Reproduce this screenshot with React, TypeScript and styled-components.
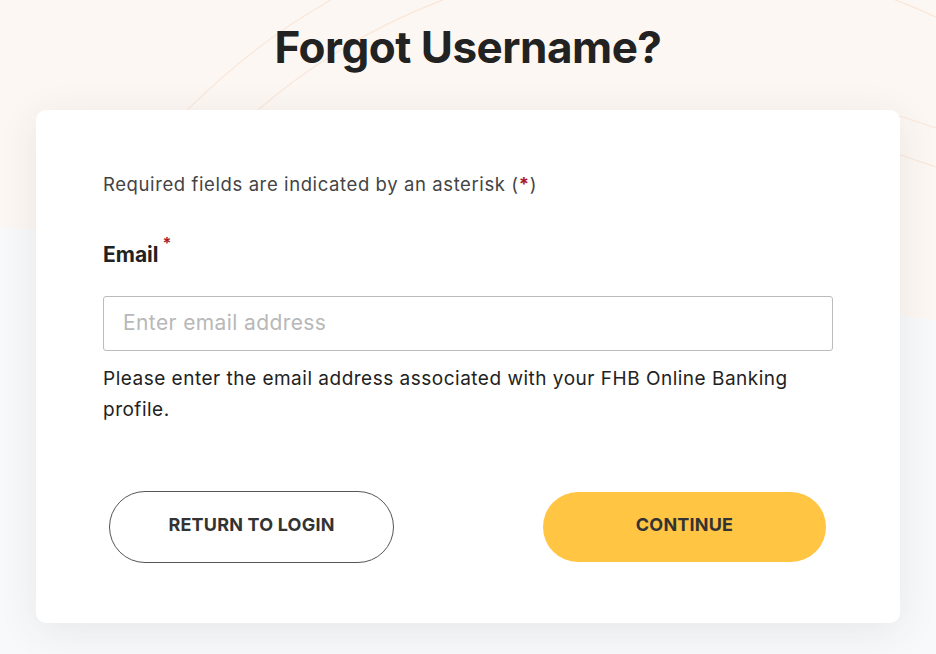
import React from "react";
import styled, { createGlobalStyle } from "styled-components";

const Global = createGlobalStyle`
  html, body { margin: 0; padding: 0; }
  body { font-family: Inter, "Noto Sans", sans-serif; background: #f8f9fa; }
  * { box-sizing: border-box; }
`;

const Page = styled.div`
  position: relative;
  width: 936px;
  height: 654px;
  overflow: hidden;
  background: #f8f9fa;
`;

const Backdrop = styled.svg`
  position: absolute;
  inset: 0;
  z-index: 0;
`;

const Content = styled.main`
  position: relative;
  z-index: 1;
  display: flex;
  flex-direction: column;
  align-items: center;
  padding-top: 20px;
`;

const Title = styled.h1`
  margin: 0;
  height: 90px;
  font-family: Inter, sans-serif;
  font-weight: 700;
  font-size: 44px;
  line-height: 54px;
  letter-spacing: -0.5px;
  color: #222222;
`;

const Card = styled.section`
  width: 864px;
  height: 513px;
  background: #ffffff;
  border-radius: 10px;
  box-shadow: 0 8px 40px rgba(40, 50, 70, 0.09);
  padding: 62px 67px 0;
  display: flex;
  flex-direction: column;
`;

const Note = styled.p`
  margin: 0;
  font-size: 18.5px;
  letter-spacing: 0.6px;
  line-height: 24px;
  color: #444444;
`;

const Star = styled.span`
  color: #a61b2b;
  font-weight: 700;
`;

const Label = styled.label`
  margin-top: 45px;
  display: flex;
  align-items: flex-start;
  gap: 4px;
  font-size: 21px;
  font-weight: 700;
  line-height: 28px;
  color: #222222;
`;

const LabelStar = styled.span`
  color: #a61b2b;
  font-size: 16px;
  line-height: 16px;
  margin-top: -6px;
`;

const Input = styled.input`
  margin-top: 27px;
  width: 730px;
  height: 55px;
  border: 1.5px solid #bcbcbc;
  border-radius: 3px;
  padding: 0 19px 2px;
  font-family: Inter, sans-serif;
  font-size: 21px;
  letter-spacing: 0.4px;
  color: #222222;
  outline: none;
  &::placeholder { color: #b8b8b8; }
`;

const Help = styled.p`
  margin: 12px 0 0;
  font-size: 19px;
  letter-spacing: 0.5px;
  line-height: 31px;
  color: #222222;
  max-width: 730px;
`;

const Actions = styled.div`
  margin-top: 66px;
  display: flex;
  justify-content: space-between;
  padding: 0 7px 0 6px;
`;

const Button = styled.button<{ $primary?: boolean }>`
  width: ${(p) => (p.$primary ? "283px" : "285px")};
  height: ${(p) => (p.$primary ? "70px" : "72px")};
  margin-top: ${(p) => (p.$primary ? "1px" : "0")};
  padding: 0 0 5px;
  border-radius: 36px;
  border: ${(p) => (p.$primary ? "none" : "1.5px solid #555555")};
  background: ${(p) => (p.$primary ? "#ffc543" : "#ffffff")};
  font-family: Inter, sans-serif;
  font-weight: 700;
  font-size: 18px;
  letter-spacing: 0.2px;
  color: #333333;
  text-transform: uppercase;
  cursor: pointer;
`;

const PEACH = "M0 0 H936 V320 Q520 268 0 227 Z";

export default function App() {
  return (
    <>
      <Global />
      <Page>
        <Backdrop width="936" height="654" viewBox="0 0 936 654">
          <defs>
            <clipPath id="peach">
              <path d={PEACH} />
            </clipPath>
          </defs>
          <path d={PEACH} fill="#fdf7f3" />
          <g clipPath="url(#peach)" fill="none" stroke="#f9e7da" strokeWidth="1.2">
            <circle cx="669" cy="590" r="632" />
            <circle cx="669" cy="590" r="680" />
            <path d="M890 113 Q912 120 936 128" />
            <path d="M890 151 Q912 159 936 167" />
          </g>
        </Backdrop>
        <Content>
          <Title>Forgot Username?</Title>
          <Card>
            <Note>
              Required fields are indicated by an asterisk (<Star>*</Star>)
            </Note>
            <Label htmlFor="email">
              Email <LabelStar>*</LabelStar>
            </Label>
            <Input id="email" type="email" placeholder="Enter email address" />
            <Help>
              Please enter the email address associated with your FHB Online Banking
              profile.
            </Help>
            <Actions>
              <Button type="button">Return to Login</Button>
              <Button type="button" $primary>
                Continue
              </Button>
            </Actions>
          </Card>
        </Content>
      </Page>
    </>
  );
}
